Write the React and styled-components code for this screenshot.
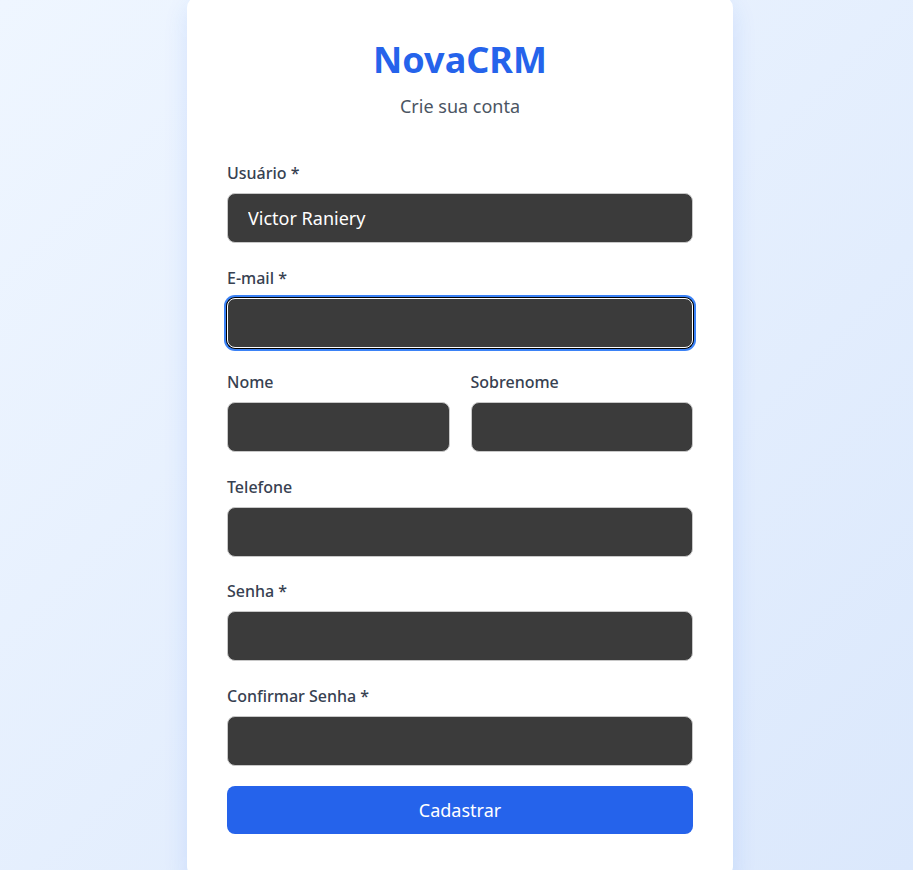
import React from 'react';
import styled, { createGlobalStyle } from 'styled-components';

const GlobalStyle = createGlobalStyle`
  * {
    box-sizing: border-box;
  }
  body {
    margin: 0;
    font-family: "Noto Sans", "Open Sans", sans-serif;
  }
`;

const Page = styled.div`
  height: 870px;
  overflow: hidden;
  display: flex;
  justify-content: center;
  padding-left: 7px;
  background: linear-gradient(135deg, #eff6ff 0%, #dbe8fc 100%);
`;

const Card = styled.div`
  width: 546px;
  margin-top: -4px;
  align-self: flex-start;
  background: #ffffff;
  border-radius: 12px;
  padding: 40px 40px 44px;
  box-shadow: 0 10px 25px rgba(37, 99, 235, 0.12);
`;

const Title = styled.h1`
  margin: 0;
  text-align: center;
  font-size: 36px;
  line-height: 48px;
  font-weight: 700;
  color: #2563eb;
`;

const Subtitle = styled.p`
  margin: 10px 0 0;
  text-align: center;
  font-size: 18px;
  line-height: 24px;
  color: #4b5563;
`;

const Form = styled.form`
  margin-top: 43px;
  display: flex;
  flex-direction: column;
  gap: 22.5px;
`;

const Row = styled.div`
  display: grid;
  grid-template-columns: 1fr 1fr;
  gap: 21px;
`;

const Field = styled.div`
  display: flex;
  flex-direction: column;
  gap: 8px;
`;

const Label = styled.label`
  font-size: 16px;
  line-height: 24px;
  font-weight: 500;
  color: #374151;
`;

const Input = styled.input`
  height: 50px;
  width: 100%;
  padding: 0 20px;
  border-radius: 8px;
  font-family: inherit;
  font-size: 18px;
  color: #ffffff;
  background: #3b3b3b;
  border: 1px solid ${({ $focused }) => ($focused ? '#ffffff' : '#c8c8c8')};
  box-shadow: ${({ $focused }) =>
    $focused ? '0 0 0 1px #000000, 0 0 0 3px #3b82f6' : 'none'};
  outline: none;
`;

const SubmitButton = styled.button`
  margin-top: -2px;
  height: 48px;
  width: 100%;
  border: none;
  border-radius: 8px;
  background: #2563eb;
  color: #ffffff;
  font-family: inherit;
  font-size: 18px;
  cursor: pointer;
`;

const FormField = ({ label, value, focused, type = 'text' }) => (
  <Field>
    <Label>{label}</Label>
    <Input type={type} defaultValue={value} $focused={focused} />
  </Field>
);

export default function App() {
  return (
    <>
      <GlobalStyle />
      <Page>
        <Card>
          <Title>NovaCRM</Title>
          <Subtitle>Crie sua conta</Subtitle>
          <Form onSubmit={(e) => e.preventDefault()}>
            <FormField label="Usuário *" value="Victor Raniery" />
            <FormField label="E-mail *" type="email" focused />
            <Row>
              <FormField label="Nome" />
              <FormField label="Sobrenome" />
            </Row>
            <FormField label="Telefone" />
            <FormField label="Senha *" type="password" />
            <FormField label="Confirmar Senha *" type="password" />
            <SubmitButton type="submit">Cadastrar</SubmitButton>
          </Form>
        </Card>
      </Page>
    </>
  );
}
